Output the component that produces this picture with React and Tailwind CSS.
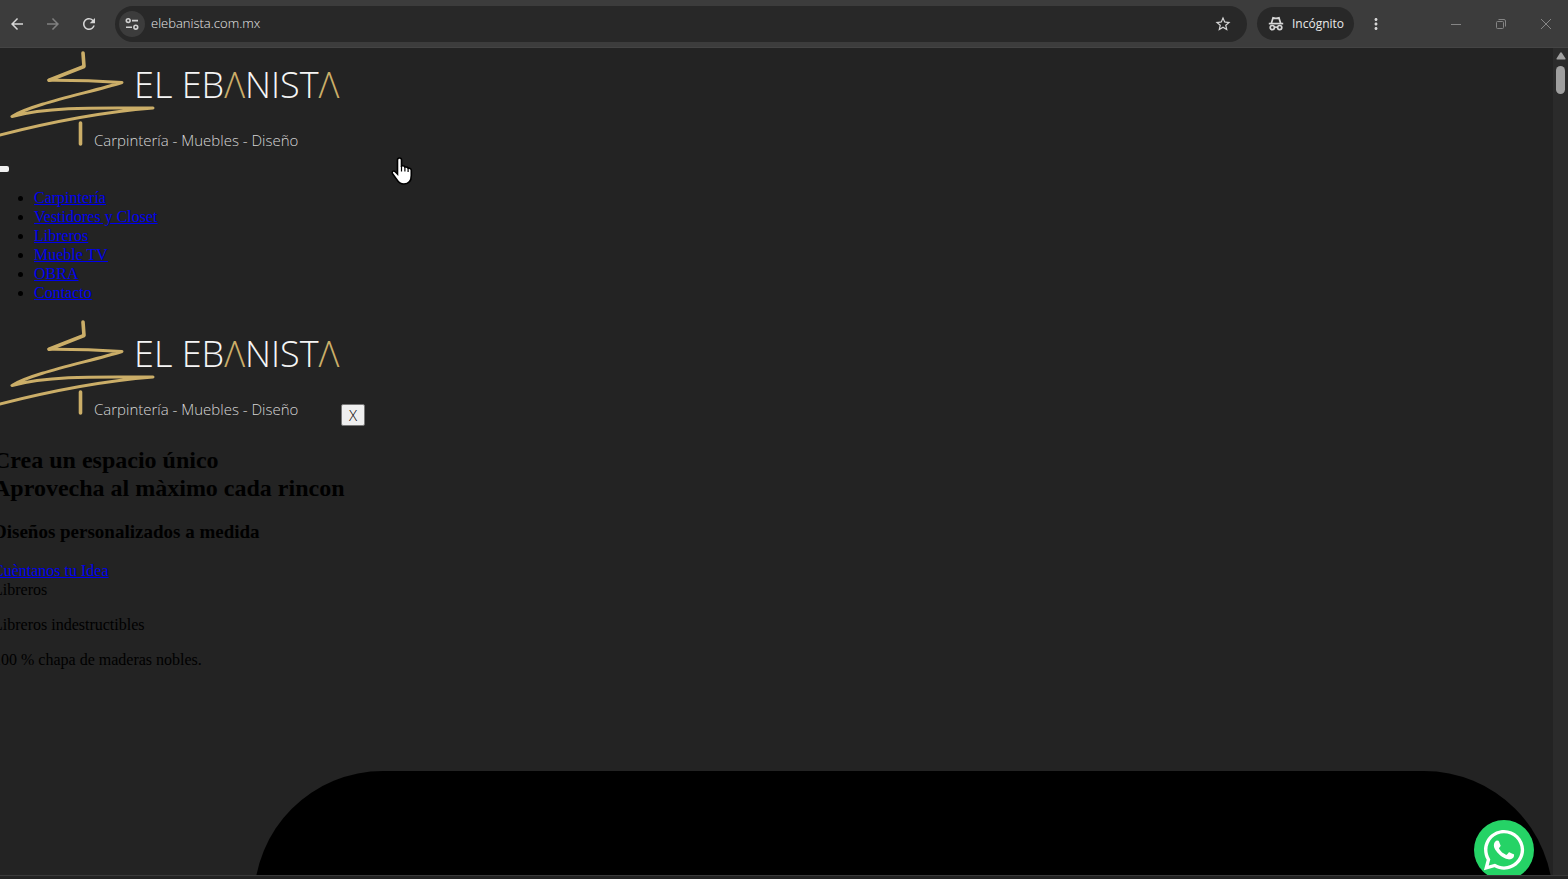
import React from 'react';
import { FaWhatsapp } from 'react-icons/fa';
import { MdArrowBack, MdArrowForward, MdRefresh, MdStarOutline, MdMoreVert } from 'react-icons/md';

const menuItems = ['Carpintería', 'Vestidores y Closet', 'Libreros', 'Mueble TV', 'OBRA', 'Contacto'];

const Logo = () => (
  <svg width="344" height="112" viewBox="-7 0 344 112" className="block shrink-0 overflow-visible" role="img" aria-label="El Ebanista">
    <g fill="none" stroke="#cbae68" strokeWidth="3" strokeLinecap="round" strokeLinejoin="round">
      <path strokeWidth="3.6" d="M83 5 L84 18.5 L49 32.2" />
      <path d="M49 32.2 Q86 32 122 34.5 C88 45 32 56 12 68.5 C50 58 104 60 153 60 C102 64 50 74 -4 88" />
      <path strokeWidth="3.6" d="M80.5 75 V96" />
    </g>
    <text x="134" y="50" fontSize="36" fontFamily="'Open Sans', sans-serif" fontWeight="300" fill="#f5f5f5">
      EL EB<tspan fill="#cbae68">Λ</tspan>NIST<tspan fill="#cbae68">Λ</tspan>
    </text>
    <text x="94" y="98" fontSize="15" fontFamily="'Open Sans', sans-serif" fontWeight="300" fill="#d6d6d6">
      Carpintería - Muebles - Diseño
    </text>
  </svg>
);

const SiteInfoIcon = () => (
  <svg width="14" height="14" viewBox="0 0 14 14" fill="none" stroke="#d0d0d0" strokeWidth="1.6">
    <circle cx="3.2" cy="3.6" r="1.9" />
    <path d="M7 3.6h6M1 10.2h6" />
    <circle cx="10.8" cy="10.2" r="1.9" />
  </svg>
);

const IncognitoIcon = () => (
  <svg width="16" height="16" viewBox="0 0 16 16" fill="none" stroke="#d6d6d6" strokeWidth="1.7">
    <path d="M0.8 7.6h14.4" />
    <path d="M3.4 7.2 L5 1.9 Q8 3 11 1.9 L12.6 7.2" />
    <circle cx="4.3" cy="11.6" r="2.1" />
    <circle cx="11.7" cy="11.6" r="2.1" />
    <path d="M6.4 11.4 Q8 10.6 9.6 11.4" />
  </svg>
);

const WindowButton = ({ label, children }) => (
  <button type="button" aria-label={label} className="flex h-8 w-[45px] items-center justify-center">
    <svg width="12" height="12" viewBox="0 0 12 12" fill="none" stroke="#858585">{children}</svg>
  </button>
);

const BrowserBar = () => (
  <header className="flex h-12 shrink-0 items-center border-b border-[#444444] bg-[#3c3c3c] font-['Open_Sans',sans-serif] text-[#d6d6d6]">
    <div className="flex w-[115px] shrink-0 items-center gap-[18px] pl-2">
      <button type="button" aria-label="Atrás"><MdArrowBack size={18} /></button>
      <button type="button" aria-label="Adelante" className="text-[#808080]"><MdArrowForward size={18} /></button>
      <button type="button" aria-label="Volver a cargar"><MdRefresh size={18} /></button>
    </div>
    <form className="flex h-9 min-w-0 flex-1 items-center rounded-full bg-[#282828] pr-[15px] pl-1">
      <button type="button" aria-label="Información del sitio" className="flex size-[26px] items-center justify-center rounded-full bg-[#3c3c3c]">
        <SiteInfoIcon />
      </button>
      <input
        type="text"
        aria-label="Dirección"
        defaultValue="elebanista.com.mx"
        className="ml-[6px] min-w-0 flex-1 bg-transparent text-[13px] font-light text-[#e8e8e8] outline-none"
      />
      <button type="button" aria-label="Favorito"><MdStarOutline size={18} /></button>
    </form>
    <button type="button" className="ml-[10px] flex h-[33px] w-[97px] items-center gap-2 rounded-full bg-[#282828] pl-[11px] text-xs text-[#e8e8e8]">
      <IncognitoIcon />
      Incógnito
    </button>
    <button type="button" aria-label="Menú" className="ml-[13px]"><MdMoreVert size={18} /></button>
    <div className="ml-12 flex">
      <WindowButton label="Minimizar"><path d="M1 6.5h10" /></WindowButton>
      <WindowButton label="Restaurar">
        <rect x="1.5" y="3.5" width="7" height="7" rx="1" />
        <path d="M3.5 1.5h5.5a1.5 1.5 0 0 1 1.5 1.5v5.5" />
      </WindowButton>
      <WindowButton label="Cerrar"><path d="M1 1l10 10M11 1L1 11" /></WindowButton>
    </div>
  </header>
);

const Scrollbar = () => (
  <div className="flex w-[15px] shrink-0 flex-col items-center bg-[#2b2b2b] pt-1">
    <svg width="10" height="8" viewBox="0 0 10 8" fill="#9f9f9f">
      <path d="M5 0.3 Q5.6 0.3 6 1 L9.5 6.5 Q9.8 7.5 9 7.5 H1 Q0.2 7.5 0.5 6.5 L4 1 Q4.4 0.3 5 0.3 Z" />
    </svg>
    <div className="mt-[6px] h-7 w-[9px] rounded-full bg-[#9f9f9f]" />
  </div>
);

const HandCursor = () => (
  <svg width="24" height="30" viewBox="0 0 24 30" className="pointer-events-none absolute top-[108px] left-[390px]">
    <path
      d="M9.5 2 c1.2 0 2 .8 2 2 v6 c2 -.6 3 0 3.4 1 c1.6 -.4 2.6 0 3.2 1.2 c1.8 -.2 3.2 .6 3.2 2.4 v5 c0 5 -2.6 8.4 -7.4 8.4 c-3.6 0 -5.4 -1.6 -7 -4.4 L2.4 17.5 c-.9 -1.8 1 -3.2 2.6 -2 L7.5 18 V4 c0 -1.2 .8 -2 2 -2z"
      fill="#fff"
      stroke="#000"
      strokeWidth="1.6"
    />
    <path d="M11.5 10 v5.5 M14.9 11 v4.5 M18.1 12.2 v3.8" stroke="#000" strokeWidth="1.2" />
  </svg>
);

const App = () => {
  return (
    <div className="flex h-screen flex-col overflow-hidden bg-[#232323]">
      <BrowserBar />
      <div className="relative flex min-h-0 flex-1 overflow-hidden">
        <main className="flex min-w-0 flex-1 flex-col overflow-hidden font-['Liberation_Serif',serif] text-base leading-[19px] text-black">
          <div className="-ml-[7px] flex flex-1 flex-col items-start">
            <Logo />
            <button type="button" aria-label="Abrir menú" className="mt-[6px] h-[6px] w-4 rounded-xs bg-[#efefef]" />
            <ul className="mt-4 list-disc pl-[41px]">
              {menuItems.map((item) => (
                <li key={item}>
                  <a href="#" className="text-[#0000ee] underline">{item}</a>
                </li>
              ))}
            </ul>
            <div className="mt-[15px] flex items-start gap-1">
              <Logo />
              <button type="button" className="mt-[87px] h-[22px] w-6 rounded-xs border border-[#767676] bg-[#efefef] font-['Open_Sans',sans-serif] text-[15px] leading-5 font-light">
                X
              </button>
            </div>
            <h1 className="mt-[17px] text-2xl leading-7 font-bold">
              Crea un espacio único
              <br />
              Aprovecha al màximo cada rincon
            </h1>
            <h2 className="mt-[19px] text-[19px] leading-[22px] font-bold">Diseños personalizados a medida</h2>
            <a href="#" className="mt-[18px] text-[#0000ee] underline">Cuèntanos tu Idea</a>
            <p>Libreros</p>
            <p className="mt-4">Libreros indestructibles</p>
            <p className="mt-4">100 % chapa de maderas nobles.</p>
            <div className="mt-[102px] min-h-[240px] self-stretch pl-[261px]">
              <div className="h-[240px] rounded-t-[129px] bg-black" />
            </div>
          </div>
        </main>
        <Scrollbar />
        <a
          href="#"
          aria-label="WhatsApp"
          className="absolute right-[34px] -bottom-[5px] flex size-[60px] items-center justify-center rounded-full bg-[#25d366] text-white"
        >
          <FaWhatsapp size={46} />
        </a>
        <HandCursor />
      </div>
      <footer className="h-1 shrink-0 border-t border-[#3a3a3a] bg-[#232323]" />
    </div>
  );
};

export default App;
